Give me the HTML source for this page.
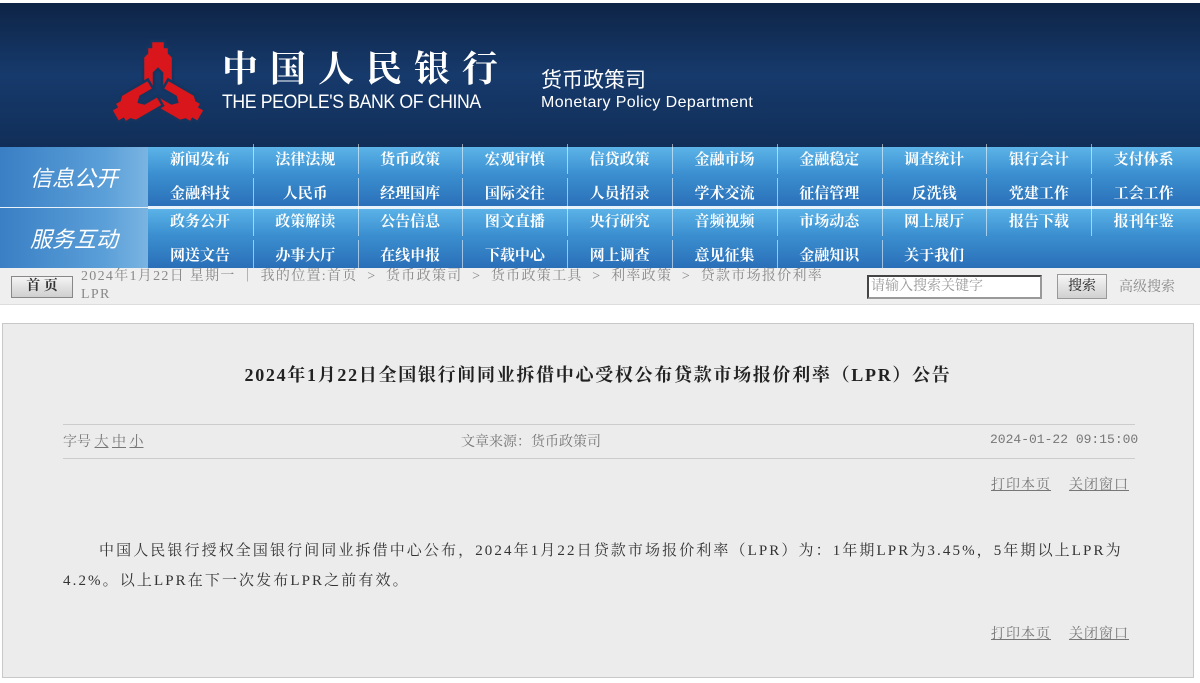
<!DOCTYPE html>
<html><head><meta charset="utf-8"><style>
*{margin:0;padding:0;box-sizing:border-box}
body{width:1200px;height:683px;background:#fff;position:relative;overflow:hidden;font-family:"Liberation Serif","Noto Serif CJK SC",serif}
.abs{position:absolute}
#hdr{left:0;top:0;width:1200px;height:147px;background:linear-gradient(180deg,#0e2446 0%,#163a6c 50%,#112e58 100%);border-top:3px solid #fff}
.nav{left:0;width:1200px;height:60px;background:linear-gradient(180deg,#5cb4e8 0%,#3b8fd0 45%,#2a6fb8 100%)}
.lab{left:0;width:148px;height:60px;background:linear-gradient(90deg,#3a7fc4,#5a9fd8 70%,#7ab4e2);color:#fff;font-family:"Noto Sans CJK SC",sans-serif;font-style:italic;font-size:22px;line-height:60px;text-align:center}
.it{position:absolute;width:104px;height:30px;line-height:30px;text-align:center;color:#fff;font-family:"Noto Serif CJK SC",serif;font-weight:bold;font-size:15px;border-left:1px solid rgba(255,255,255,.55)}
#bc{left:0;top:268px;width:1200px;height:37px;background:#efefef;border-bottom:1px solid #ddd;font-size:14px;color:#888}
#box{left:2px;top:323px;width:1192px;height:355px;background:#ececec;border:1px solid #c8c8c8}
.g{color:#777;font-size:14px}
.pl{letter-spacing:1px}
</style></head><body>
<div id="hdr" class="abs">
<svg class="abs" style="left:0;top:0" width="220" height="147">
<g transform="translate(158,88)" fill="#d8161b" stroke="#15355f" stroke-width="2.5">
<g id="arm"><polygon points="-15,-3 -15,-34 -11,-38 -11,-44 -7,-44 -7,-50 7,-50 7,-44 11,-44 11,-38 15,-34 15,-3 4,-3 4,-18 0,-22 -4,-18 -4,-3"/></g>
<use href="#arm" transform="rotate(120)"/><use href="#arm" transform="rotate(240)"/>
</g></svg>
<div class="abs" style="left:222px;top:42px;color:#fff;font-family:'Noto Serif CJK SC',serif;font-weight:bold;font-size:36px;letter-spacing:12px;line-height:44px">中国人民银行</div>
<div class="abs" style="left:222px;top:89px;color:#fff;font-family:'Liberation Sans',sans-serif;font-size:19px;letter-spacing:-0.4px;transform:scaleX(0.93);transform-origin:left">THE PEOPLE'S BANK OF CHINA</div>
<div class="abs" style="left:541px;top:62px;color:#fff;font-family:'Noto Sans CJK SC',sans-serif;font-size:21px;line-height:28px">货币政策司</div>
<div class="abs" style="left:541px;top:91px;color:#fff;font-family:'Liberation Sans',sans-serif;font-size:16px;letter-spacing:0.4px">Monetary Policy Department</div>
</div>
<div class="abs nav" style="top:147px"></div>
<div class="abs nav" style="top:208px"></div>
<div class="abs" style="left:0;top:206px;width:1200px;height:3px;background:#e8f2fa"></div>
<div class="abs lab" style="top:147px">信息公开</div>
<div class="abs lab" style="top:208px">服务互动</div>
<div id="items"></div>
<div id="bc" class="abs">
<div class="abs" style="left:11px;top:8px;width:62px;height:22px;border:1px solid #888;background:linear-gradient(#f4f4f4,#cfcfcf);font-weight:bold;color:#333;font-size:14px;text-align:center;line-height:20px">首 页</div>
<div class="abs" style="left:81px;top:0px;line-height:18px;width:790px;letter-spacing:1.3px;white-space:nowrap">2024年1月22日 星期一 ｜ 我的位置:首页 &nbsp;&gt;&nbsp; 货币政策司 &nbsp;&gt;&nbsp; 货币政策工具 &nbsp;&gt;&nbsp; 利率政策 &nbsp;&gt;&nbsp; 贷款市场报价利率<br>LPR</div>
<div class="abs" style="left:867px;top:7px;width:175px;height:24px;border:2px inset #999;background:#fff;font-size:14px;line-height:20px;padding-left:2px;color:#999">请输入搜索关键字</div>
<div class="abs" style="left:1057px;top:6px;width:50px;height:25px;border:1px solid #999;background:linear-gradient(#f6f6f6,#d0d0d0);color:#222;font-size:14px;text-align:center;line-height:23px">搜索</div>
<div class="abs" style="left:1119px;top:8px;font-size:14px">高级搜索</div>
</div>
<div id="box" class="abs">
<div class="abs" style="left:0;width:1190px;top:37px;text-align:center;font-weight:bold;font-size:18px;letter-spacing:1.7px;color:#222">2024年1月22日全国银行间同业拆借中心受权公布贷款市场报价利率（LPR）公告</div>
<div class="abs" style="left:60px;top:100px;width:1072px;height:1px;background:#ccc"></div>
<div class="abs" style="left:60px;top:134px;width:1072px;height:1px;background:#ccc"></div>
<div class="abs g" style="left:60px;top:107px">字号 <u>大</u> <u>中</u> <u>小</u></div>
<div class="abs g" style="left:458px;top:107px">文章来源：货币政策司</div>
<div class="abs g" style="left:987px;top:108px;font-family:'Liberation Mono',monospace;font-size:13px">2024-01-22 09:15:00</div>
<div class="abs g pl" style="left:988px;top:150px"><u>打印本页</u> &nbsp;&nbsp; <u>关闭窗口</u></div>
<div class="abs" style="left:60px;top:212px;width:1100px;font-size:15px;line-height:30px;color:#333;letter-spacing:2.1px;white-space:nowrap"><span style="display:inline-block;width:36px"></span>中国人民银行授权全国银行间同业拆借中心公布，2024年1月22日贷款市场报价利率（LPR）为：1年期LPR为3.45%，5年期以上LPR为<br>4.2%。以上LPR在下一次发布LPR之前有效。</div>
<div class="abs g pl" style="left:988px;top:299px"><u>打印本页</u> &nbsp;&nbsp; <u>关闭窗口</u></div>
</div>
<script>
var r=[["新闻发布","法律法规","货币政策","宏观审慎","信贷政策","金融市场","金融稳定","调查统计","银行会计","支付体系"],
["金融科技","人民币","经理国库","国际交往","人员招录","学术交流","征信管理","反洗钱","党建工作","工会工作"],
["政务公开","政策解读","公告信息","图文直播","央行研究","音频视频","市场动态","网上展厅","报告下载","报刊年鉴"],
["网送文告","办事大厅","在线申报","下载中心","网上调查","意见征集","金融知识","关于我们"]];
var tops=[144,178,206,240],h="";
r.forEach(function(row,i){row.forEach(function(t,j){h+='<div class="it" style="left:'+(148+j*104.8)+'px;top:'+tops[i]+'px;'+(j==0?'border-left:none':'')+'">'+t+'</div>';});});
document.getElementById('items').innerHTML=h;
</script>
</body></html>
